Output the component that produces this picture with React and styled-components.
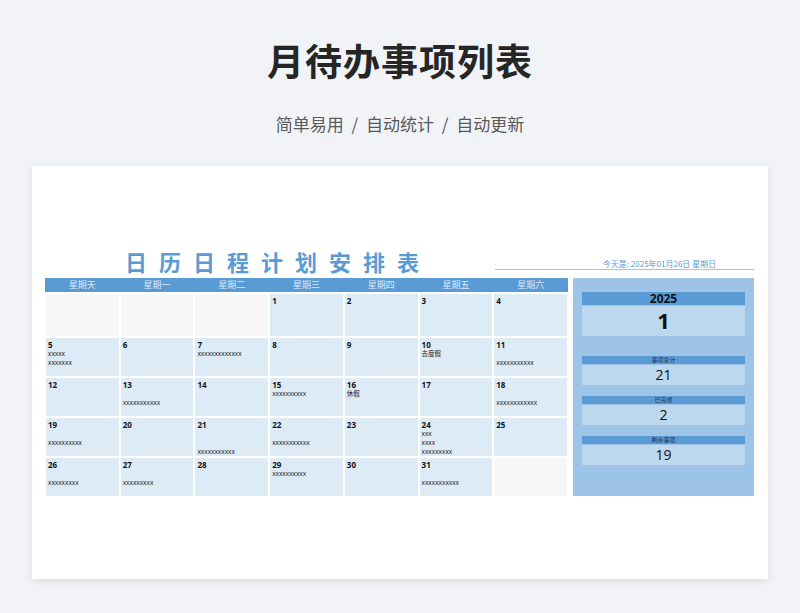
import styled, { createGlobalStyle } from "styled-components";

const GlobalStyle = createGlobalStyle`
  body {
    margin: 0;
    background: #f1f3f6;
    font-family: "Noto Sans CJK SC", "Noto Sans", sans-serif;
  }
`;

const weekdays = ["星期天", "星期一", "星期二", "星期三", "星期四", "星期五", "星期六"];

// "" marks a blank line before the item
const cells = [
  null, null, null,
  { d: 1 }, { d: 2 }, { d: 3 }, { d: 4 },
  { d: 5, items: ["xxxxx", "xxxxxxx"] }, { d: 6 }, { d: 7, items: ["xxxxxxxxxxxxx"] },
  { d: 8 }, { d: 9 }, { d: 10, items: ["去度假"] }, { d: 11, items: ["", "xxxxxxxxxxx"] },
  { d: 12 }, { d: 13, items: ["", "xxxxxxxxxxx"] }, { d: 14 },
  { d: 15, items: ["xxxxxxxxxx"] }, { d: 16, items: ["休假"] }, { d: 17 }, { d: 18, items: ["", "xxxxxxxxxxxx"] },
  { d: 19, items: ["", "xxxxxxxxxx"] }, { d: 20 }, { d: 21, items: ["", "", "xxxxxxxxxxx"] },
  { d: 22, items: ["", "xxxxxxxxxxx"] }, { d: 23 }, { d: 24, items: ["xxx", "xxxx", "xxxxxxxxx"] }, { d: 25 },
  { d: 26, items: ["", "xxxxxxxxx"] }, { d: 27, items: ["", "xxxxxxxxx"] }, { d: 28 },
  { d: 29, items: ["xxxxxxxxxx"] }, { d: 30 }, { d: 31, items: ["", "xxxxxxxxxxx"] }, null,
];

const stats = [
  { label: "事项总计", value: 21 },
  { label: "已完成", value: 2 },
  { label: "剩余事项", value: 19 },
];

const App = () => (
  <Page>
    <GlobalStyle />
    <Title>月待办事项列表</Title>
    <Subtitle>简单易用 / 自动统计 / 自动更新</Subtitle>
    <Card>
      <TopRow>
        <SheetTitle>日历日程计划安排表</SheetTitle>
        <Today>今天是: 2025年01月26日 星期日</Today>
      </TopRow>
      <Body>
        <Calendar>
          {weekdays.map((w) => (
            <DayHead key={w}>{w}</DayHead>
          ))}
          {cells.map((c, i) =>
            c ? (
              <Cell key={i}>
                <DayNum>{c.d}</DayNum>
                {(c.items || []).map((t, j) => (
                  <Item key={j}>{t || "\u00a0"}</Item>
                ))}
              </Cell>
            ) : (
              <Cell key={i} $empty />
            )
          )}
        </Calendar>
        <Side>
          <LabelBar $big>2025</LabelBar>
          <ValueBox $big>1</ValueBox>
          {stats.map((s, i) => (
            <Stat key={s.label} $first={i === 0}>
              <LabelBar>{s.label}</LabelBar>
              <ValueBox>{s.value}</ValueBox>
            </Stat>
          ))}
        </Side>
      </Body>
    </Card>
  </Page>
);

const Page = styled.div`
  width: 800px;
  height: 613px;
  display: flex;
  flex-direction: column;
  align-items: center;
  overflow: hidden;
`;

const Title = styled.h1`
  margin: 36px 0 0;
  font-size: 37px;
  font-weight: 700;
  color: #262626;
  line-height: 48px;
  letter-spacing: 1px;
`;

const Subtitle = styled.div`
  margin-top: 28px;
  font-size: 17px;
  color: #595959;
  line-height: 24px;
  word-spacing: 4px;
`;

const Card = styled.div`
  margin-top: 30px;
  width: 736px;
  height: 413px;
  background: #fff;
  box-shadow: 0 2px 8px rgba(0, 0, 0, 0.1);
  padding: 78px 14px 0;
  box-sizing: border-box;
`;

const TopRow = styled.div`
  display: flex;
  align-items: flex-end;
  height: 30px;
`;

const SheetTitle = styled.div`
  margin-left: 79px;
  font-size: 22px;
  font-weight: 700;
  color: #5b9bd5;
  letter-spacing: 12px;
  line-height: 26px;
`;

const Today = styled.div`
  margin-left: auto;
  width: 259px;
  text-align: center;
  font-size: 8px;
  color: #5b9bd5;
  border-bottom: 1.5px solid #9dc3e6;
  line-height: 10px;
  margin-bottom: 4px;
  text-indent: 70px;
`;

const Body = styled.div`
  display: flex;
  gap: 6px;
  margin-top: 4px;
`;

const Calendar = styled.div`
  width: 521px;
  display: grid;
  grid-template-columns: repeat(7, 1fr);
  grid-template-rows: 14px 42px repeat(4, 38px);
  gap: 2px;
`;

const DayHead = styled.div`
  background: #5b9bd5;
  color: #dbe8f6;
  font-size: 9px;
  text-align: center;
  line-height: 14px;
  margin: 0 -1px;
`;

const Cell = styled.div`
  background: ${(p) => (p.$empty ? "#f7f7f7" : "#ddebf7")};
  padding: 2px 2px 0;
  overflow: hidden;
`;

const DayNum = styled.div`
  font-family: "Open Sans", sans-serif;
  font-size: 8px;
  font-weight: 700;
  color: #111;
  line-height: 9px;
`;

const Item = styled.div`
  font-family: "Open Sans", "Noto Sans CJK SC", sans-serif;
  font-size: 6.5px;
  color: #222;
  line-height: 9px;
`;

const Side = styled.div`
  width: 181px;
  height: 218px;
  background: #9dc3e6;
  padding: 14px 9px 0;
  box-sizing: border-box;
  display: flex;
  flex-direction: column;
`;

const Stat = styled.div`
  margin-top: ${(p) => (p.$first ? "20px" : "11px")};
`;

const LabelBar = styled.div`
  background: #5b9bd5;
  text-align: center;
  color: ${(p) => (p.$big ? "#111" : "#1e3a5c")};
  font-family: "Open Sans", "Noto Sans CJK SC", sans-serif;
  font-size: ${(p) => (p.$big ? "12px" : "6px")};
  font-weight: ${(p) => (p.$big ? 700 : 400)};
  line-height: ${(p) => (p.$big ? "13px" : "8px")};
`;

const ValueBox = styled.div`
  background: #bdd7ee;
  margin-top: 1px;
  text-align: center;
  font-family: "Open Sans", sans-serif;
  color: #111;
  font-size: ${(p) => (p.$big ? "22px" : "14px")};
  font-weight: ${(p) => (p.$big ? 700 : 400)};
  height: ${(p) => (p.$big ? "30px" : "20px")};
  line-height: ${(p) => (p.$big ? "28px" : "20px")};
`;

export default App;
